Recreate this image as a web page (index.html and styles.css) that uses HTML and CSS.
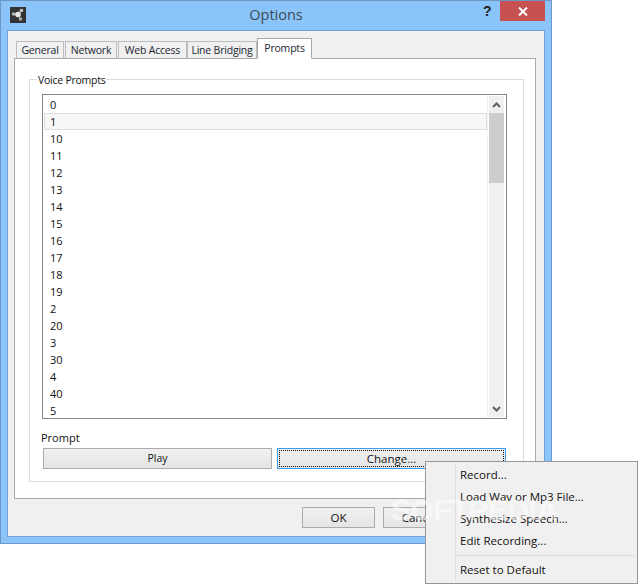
FILE: index.html
```html
<!DOCTYPE html>
<html lang="en">
<head>
<meta charset="utf-8">
<title>Options</title>
<link rel="stylesheet" href="styles.css">
</head>
<body>
<div class="window">
  <div class="titlebar">
    <svg class="appicon" width="16" height="16" viewBox="0 0 16 16">
      <rect width="16" height="16" fill="#333"/>
      <path d="M3.5 7 L8 7 L11.5 3.5 M8 7 L10.5 12" stroke="#9a9a9a" stroke-width="1.6" fill="none"/>
      <circle cx="3.5" cy="7" r="1.8" fill="#b8b8b8"/>
      <circle cx="8" cy="7.5" r="2.8" fill="#e8e8e8"/>
      <circle cx="11.5" cy="3.5" r="1.8" fill="#c4c4c4"/>
      <circle cx="10.5" cy="12" r="1.8" fill="#a8a8a8"/>
    </svg>
    <div class="title">Options</div>
    <div class="help">?</div>
    <div class="close">
      <svg width="10" height="9" viewBox="0 0 10 9"><path d="M1 0.5 L9 8.5 M9 0.5 L1 8.5" stroke="#fff" stroke-width="2"/></svg>
    </div>
  </div>
  <div class="client">
    <div class="tabs">
      <div class="tab tab-general">General</div>
      <div class="tab tab-network">Network</div>
      <div class="tab tab-web">Web Access</div>
      <div class="tab tab-line">Line Bridging</div>
      <div class="tab tab-active">Prompts</div>
    </div>
    <div class="pane">
      <div class="group">
        <div class="legend">Voice Prompts</div>
        <div class="listbox">
          <div class="rows">
            <div class="row">0</div>
            <div class="row row-current">1</div>
            <div class="row">10</div>
            <div class="row">11</div>
            <div class="row">12</div>
            <div class="row">13</div>
            <div class="row">14</div>
            <div class="row">15</div>
            <div class="row">16</div>
            <div class="row">17</div>
            <div class="row">18</div>
            <div class="row">19</div>
            <div class="row">2</div>
            <div class="row">20</div>
            <div class="row">3</div>
            <div class="row">30</div>
            <div class="row">4</div>
            <div class="row">40</div>
            <div class="row">5</div>
          </div>
          <div class="scrollbar">
            <div class="arrow">
              <svg width="9" height="6" viewBox="0 0 9 6"><path d="M1 5 L4.5 1.5 L8 5" fill="none" stroke="#606060" stroke-width="2"/></svg>
            </div>
            <div class="thumb"></div>
            <div class="track"></div>
            <div class="arrow">
              <svg width="9" height="6" viewBox="0 0 9 6"><path d="M1 1 L4.5 4.5 L8 1" fill="none" stroke="#606060" stroke-width="2"/></svg>
            </div>
          </div>
        </div>
        <div class="prompt-label">Prompt</div>
        <div class="prompt-buttons">
          <div class="btn btn-wide btn-play">Play</div>
          <div class="btn btn-wide btn-focus"><span class="focus-ring">Change...</span></div>
        </div>
      </div>
    </div>
    <div class="footer">
      <div class="btn btn-footer">OK</div>
      <div class="btn btn-footer">Cancel</div>
    </div>
  </div>
</div>
<div class="menu">
  <div class="menu-item">Record...</div>
  <div class="menu-item">Load Wav or Mp3 File...</div>
  <div class="menu-item">Synthesize Speech...</div>
  <div class="menu-item">Edit Recording...</div>
  <div class="menu-sep"></div>
  <div class="menu-item">Reset to Default</div>
</div>
<div class="watermark">SOFTPEDIA</div>
</body>
</html>
```
FILE: styles.css
```css
* { box-sizing: border-box; }
html, body { margin: 0; padding: 0; }
body {
  width: 638px;
  height: 584px;
  position: relative;
  overflow: hidden;
  background: #fff;
  font-family: "Open Sans", "Noto Sans", sans-serif;
  font-size: 11px;
  color: #111;
}
.window {
  width: 552px;
  height: 544px;
  display: flex;
  flex-direction: column;
  background: #8ac4f9;
  border: 1px solid #6b99c4;
  padding: 0 6px 6px;
}
.titlebar {
  height: 29px;
  flex: none;
  display: flex;
  align-items: flex-start;
  position: relative;
}
.appicon { margin: 6px 0 0 3px; flex: none; }
.title {
  position: absolute;
  left: 0;
  right: 0;
  top: 4px;
  text-align: center;
  font-size: 14.5px;
  line-height: 20px;
  color: #3b4a58;
}
.help {
  position: absolute;
  left: 476px;
  top: 2px;
  font-size: 14px;
  line-height: 16px;
  font-weight: 700;
  font-family: "Liberation Sans", sans-serif;
  color: #222;
}
.close {
  position: absolute;
  left: 493px;
  top: 0;
  width: 45px;
  height: 20px;
  background: #c75050;
  display: flex;
  align-items: center;
  justify-content: center;
}
.client {
  flex: 1;
  display: flex;
  flex-direction: column;
  background: #f0f0f0;
  border: 1px solid #6fa3d6;
  padding: 7px 8px 0 6px;
}
.tabs {
  height: 21px;
  flex: none;
  display: flex;
  align-items: flex-end;
  padding-left: 2px;
  margin-bottom: -1px;
  position: relative;
  z-index: 1;
  font-size: 10.5px;
  letter-spacing: -0.2px;
}
.tab {
  height: 18px;
  border: 1px solid #bcbcbc;
  border-bottom: 1px solid #a8a8a8;
  background: #f0f0f0;
  text-align: center;
  line-height: 16px;
  color: #1b2733;
  flex: none;
  white-space: nowrap;
}
.tab-general { width: 48px; margin-right: 1px; }
.tab-network { width: 52px; margin-right: 1px; }
.tab-web { width: 69px; }
.tab-line { width: 70px; }
.tab-active {
  width: 55px;
  height: 21px;
  background: #fff;
  border-color: #a8a8a8;
  border-bottom-color: #fff;
  line-height: 18px;
}
.pane {
  height: 441px;
  flex: none;
  background: #fff;
  border: 1px solid #a8a8a8;
  padding: 20px 11px 0 14px;
}
.group {
  height: 403px;
  border: 1px solid #dcdcdc;
  position: relative;
  padding: 14px 17px 0 12px;
}
.legend {
  position: absolute;
  left: 7px;
  top: -8px;
  padding: 0 1px;
  background: #fff;
  line-height: 16px;
  font-size: 10.5px;
  letter-spacing: -0.25px;
}
.listbox {
  width: 465px;
  height: 325px;
  border: 1px solid #80858c;
  display: flex;
  padding: 1px;
}
.rows { flex: 1; min-width: 0; }
.row {
  height: 17px;
  line-height: 17px;
  padding-left: 6px;
  color: #111;
}
.row-current {
  background: #f7f7f7;
  border: 1px solid #dedede;
  line-height: 15px;
  padding-left: 5px;
}
.scrollbar {
  width: 18px;
  flex: none;
  display: flex;
  flex-direction: column;
  padding: 0 1px;
  border-left: 1px solid #eef3f8;
}
.arrow {
  height: 17px;
  flex: none;
  display: flex;
  align-items: center;
  justify-content: center;
  background: #f0f0f0;
}
.thumb { height: 70px; flex: none; background: #cdcdcd; }
.track { flex: 1; background: #f0f0f0; }
.prompt-label {
  margin: 11px 0 0 -1px;
  line-height: 16px;
  font-size: 11px;
}
.prompt-buttons {
  display: flex;
  gap: 5px;
  margin: 2px 0 0 1px;
  width: 463px;
}
.btn {
  height: 21px;
  border: 1px solid #acacac;
  background: linear-gradient(#f0f0f0, #e5e5e5);
  text-align: center;
  line-height: 19px;
  color: #111;
}
.btn-wide { width: 229px; flex: none; }
.btn-play { font-size: 10.5px; }
.btn-focus {
  border-color: #3c9df0;
  padding: 1px;
  font-size: 11.5px;
}
.focus-ring {
  display: block;
  height: 17px;
  line-height: 15px;
  border: 1px dotted #111;
}
.footer {
  display: flex;
  gap: 8px;
  padding: 8px 0 0 288px;
  font-size: 11.5px;
}
.btn-footer { width: 73px; }
.menu {
  position: absolute;
  left: 425px;
  top: 461px;
  width: 213px;
  height: 123px;
  background: #f0f0f0;
  border: 1px solid #979797;
  padding: 2px 2px 2px 34px;
  font-size: 11.5px;
}
.menu::before {
  content: "";
  position: absolute;
  left: 29px;
  top: 2px;
  bottom: 2px;
  width: 1px;
  background: #dcdcdc;
}
.menu-item {
  height: 22px;
  line-height: 22px;
  color: #111;
}
.menu-sep {
  height: 1px;
  background: #d8d8d8;
  margin: 3px 0 3px -4px;
}
.watermark {
  position: absolute;
  left: 391px;
  top: 493px;
  font-family: "Liberation Sans", sans-serif;
  font-size: 30px;
  font-weight: 700;
  letter-spacing: -0.6px;
  color: rgba(255, 255, 255, 0.5);
  white-space: nowrap;
}
```
